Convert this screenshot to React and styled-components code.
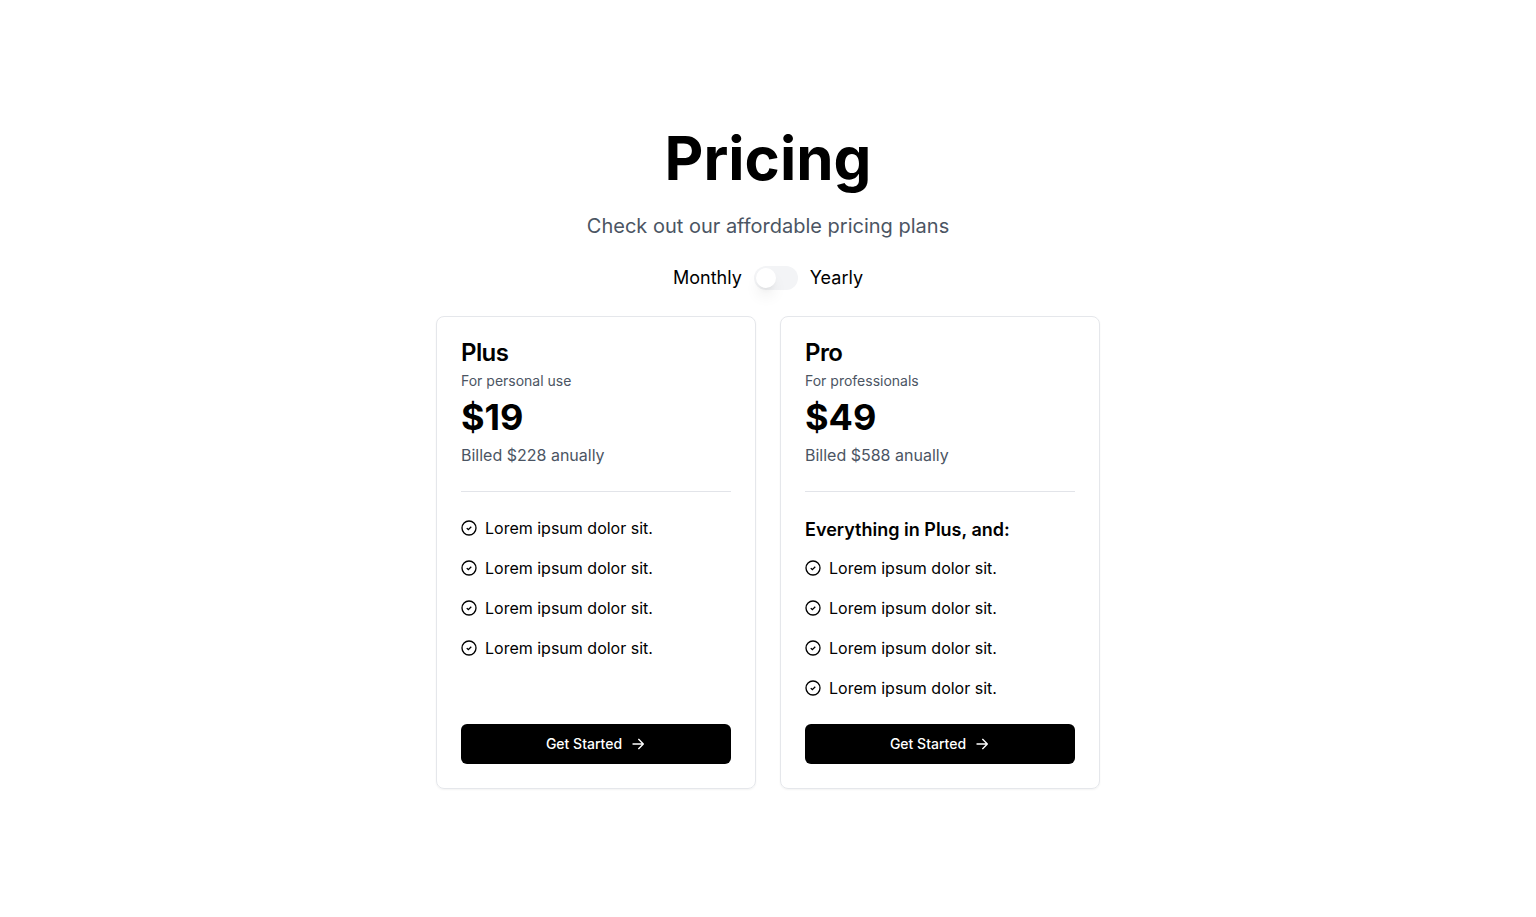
import React, { useState } from 'react';
import styled, { createGlobalStyle } from 'styled-components';

const plans = [
    {
        title: 'Plus',
        description: 'For personal use',
        price: 19,
        total: 228,
        features: ['Lorem ipsum dolor sit.', 'Lorem ipsum dolor sit.', 'Lorem ipsum dolor sit.', 'Lorem ipsum dolor sit.'],
    },
    {
        title: 'Pro',
        description: 'For professionals',
        price: 49,
        total: 588,
        featuresTitle: 'Everything in Plus, and:',
        features: ['Lorem ipsum dolor sit.', 'Lorem ipsum dolor sit.', 'Lorem ipsum dolor sit.', 'Lorem ipsum dolor sit.'],
    },
];

function CheckIcon() {
    return (
        <Icon viewBox="0 0 24 24" strokeWidth="2" aria-hidden="true">
            <circle cx="12" cy="12" r="10.5" />
            <path d="M8.6 12.2l2.4 2.2 4.4-4.4" />
        </Icon>
    );
}

function ArrowIcon() {
    return (
        <Icon viewBox="0 0 24 24" strokeWidth="2" strokeLinecap="round" strokeLinejoin="round" aria-hidden="true">
            <path d="M4.5 12h15M13 5l7 7-7 7" />
        </Icon>
    );
}

function PricingCard({ plan }) {
    return (
        <Card>
            <CardHeader>
                <CardTitle>{plan.title}</CardTitle>
                <Description>{plan.description}</Description>
                <Price>${plan.price}</Price>
                <Billing>Billed ${plan.total} anually</Billing>
            </CardHeader>
            <CardBody>
                {plan.featuresTitle && <FeaturesTitle>{plan.featuresTitle}</FeaturesTitle>}
                <FeatureList>
                    {plan.features.map((feature, index) => (
                        <Feature key={index}>
                            <CheckIcon />
                            {feature}
                        </Feature>
                    ))}
                </FeatureList>
            </CardBody>
            <StartButton type="button">
                Get Started
                <ArrowIcon />
            </StartButton>
        </Card>
    );
}

function App() {
    const [checked, setChecked] = useState(false);

    return (
        <>
            <GlobalStyle />
            <Page>
                <Title>Pricing</Title>
                <Subtitle>Check out our affordable pricing plans</Subtitle>
                <BillingToggle>
                    <label htmlFor="billing">Monthly</label>
                    <Switch
                        id="billing"
                        type="checkbox"
                        role="switch"
                        checked={checked}
                        onChange={(event) => setChecked(event.target.checked)}
                    />
                    <label htmlFor="billing">Yearly</label>
                </BillingToggle>
                <Cards>
                    {plans.map((plan) => (
                        <PricingCard key={plan.title} plan={plan} />
                    ))}
                </Cards>
            </Page>
        </>
    );
}

const GlobalStyle = createGlobalStyle`
  *, *::before, *::after {
    box-sizing: border-box;
    margin: 0;
    padding: 0;
  }

  body {
    background: #fff;
    color: #000;
    font-family: Inter, sans-serif;
    font-size: 16px;
    line-height: 24px;
    -webkit-font-smoothing: antialiased;
  }
`;

const Page = styled.main`
  min-height: 100vh;
  padding: 24px;
  display: flex;
  flex-direction: column;
  align-items: center;
  justify-content: center;
  gap: 24px;
`;

const Title = styled.h1`
  font-size: 60px;
  line-height: 60px;
  font-weight: 700;
`;

const Subtitle = styled.p`
  font-size: 20px;
  line-height: 28px;
  color: #4b5563;
`;

const BillingToggle = styled.div`
  display: flex;
  align-items: center;
  gap: 12px;
  font-size: 18px;
  line-height: 28px;
`;

const Switch = styled.input`
  appearance: none;
  width: 44px;
  height: 24px;
  padding: 2px;
  border-radius: 12px;
  background: ${({ checked }) => (checked ? '#000' : '#f3f4f6')};
  cursor: pointer;

  &::before {
    content: '';
    display: block;
    width: 20px;
    height: 20px;
    margin-left: ${({ checked }) => (checked ? '20px' : '0')};
    border-radius: 50%;
    background: #fff;
    box-shadow: 0 10px 15px -3px rgba(0, 0, 0, 0.1), 0 4px 6px -4px rgba(0, 0, 0, 0.1);
  }
`;

const Cards = styled.div`
  display: flex;
  flex-wrap: wrap;
  justify-content: center;
  gap: 24px;
`;

const Card = styled.section`
  width: 320px;
  padding: 24px;
  display: flex;
  flex-direction: column;
  border: 1px solid #e5e7eb;
  border-radius: 8px;
  box-shadow: 0 1px 2px rgba(0, 0, 0, 0.05);
`;

const CardHeader = styled.div`
  display: flex;
  flex-direction: column;
  gap: 6px;
  padding-bottom: 24px;
  border-bottom: 1px solid #e2e4e9;
`;

const CardTitle = styled.h2`
  font-size: 24px;
  line-height: 24px;
  font-weight: 600;
  letter-spacing: -0.025em;
`;

const Description = styled.p`
  font-size: 14px;
  line-height: 20px;
  color: #4b5563;
`;

const Price = styled.p`
  font-size: 36px;
  line-height: 40px;
  font-weight: 700;
`;

const Billing = styled.p`
  color: #4b5563;
`;

const CardBody = styled.div`
  flex: 1;
  display: flex;
  flex-direction: column;
  gap: 12px;
  padding: 24px 0;
`;

const FeaturesTitle = styled.h3`
  font-size: 18px;
  line-height: 28px;
  font-weight: 600;
`;

const FeatureList = styled.ul`
  display: flex;
  flex-direction: column;
  gap: 16px;
  list-style: none;
`;

const Feature = styled.li`
  display: flex;
  align-items: center;
  gap: 8px;
`;

const Icon = styled.svg`
  width: 16px;
  height: 16px;
  flex-shrink: 0;
  fill: none;
  stroke: currentColor;
`;

const StartButton = styled.button`
  width: 100%;
  height: 40px;
  display: flex;
  align-items: center;
  justify-content: center;
  gap: 8px;
  border: 0;
  border-radius: 6px;
  background: #000;
  color: #fff;
  font-family: inherit;
  font-size: 14px;
  line-height: 20px;
  font-weight: 500;
  cursor: pointer;
`;

export default App;
